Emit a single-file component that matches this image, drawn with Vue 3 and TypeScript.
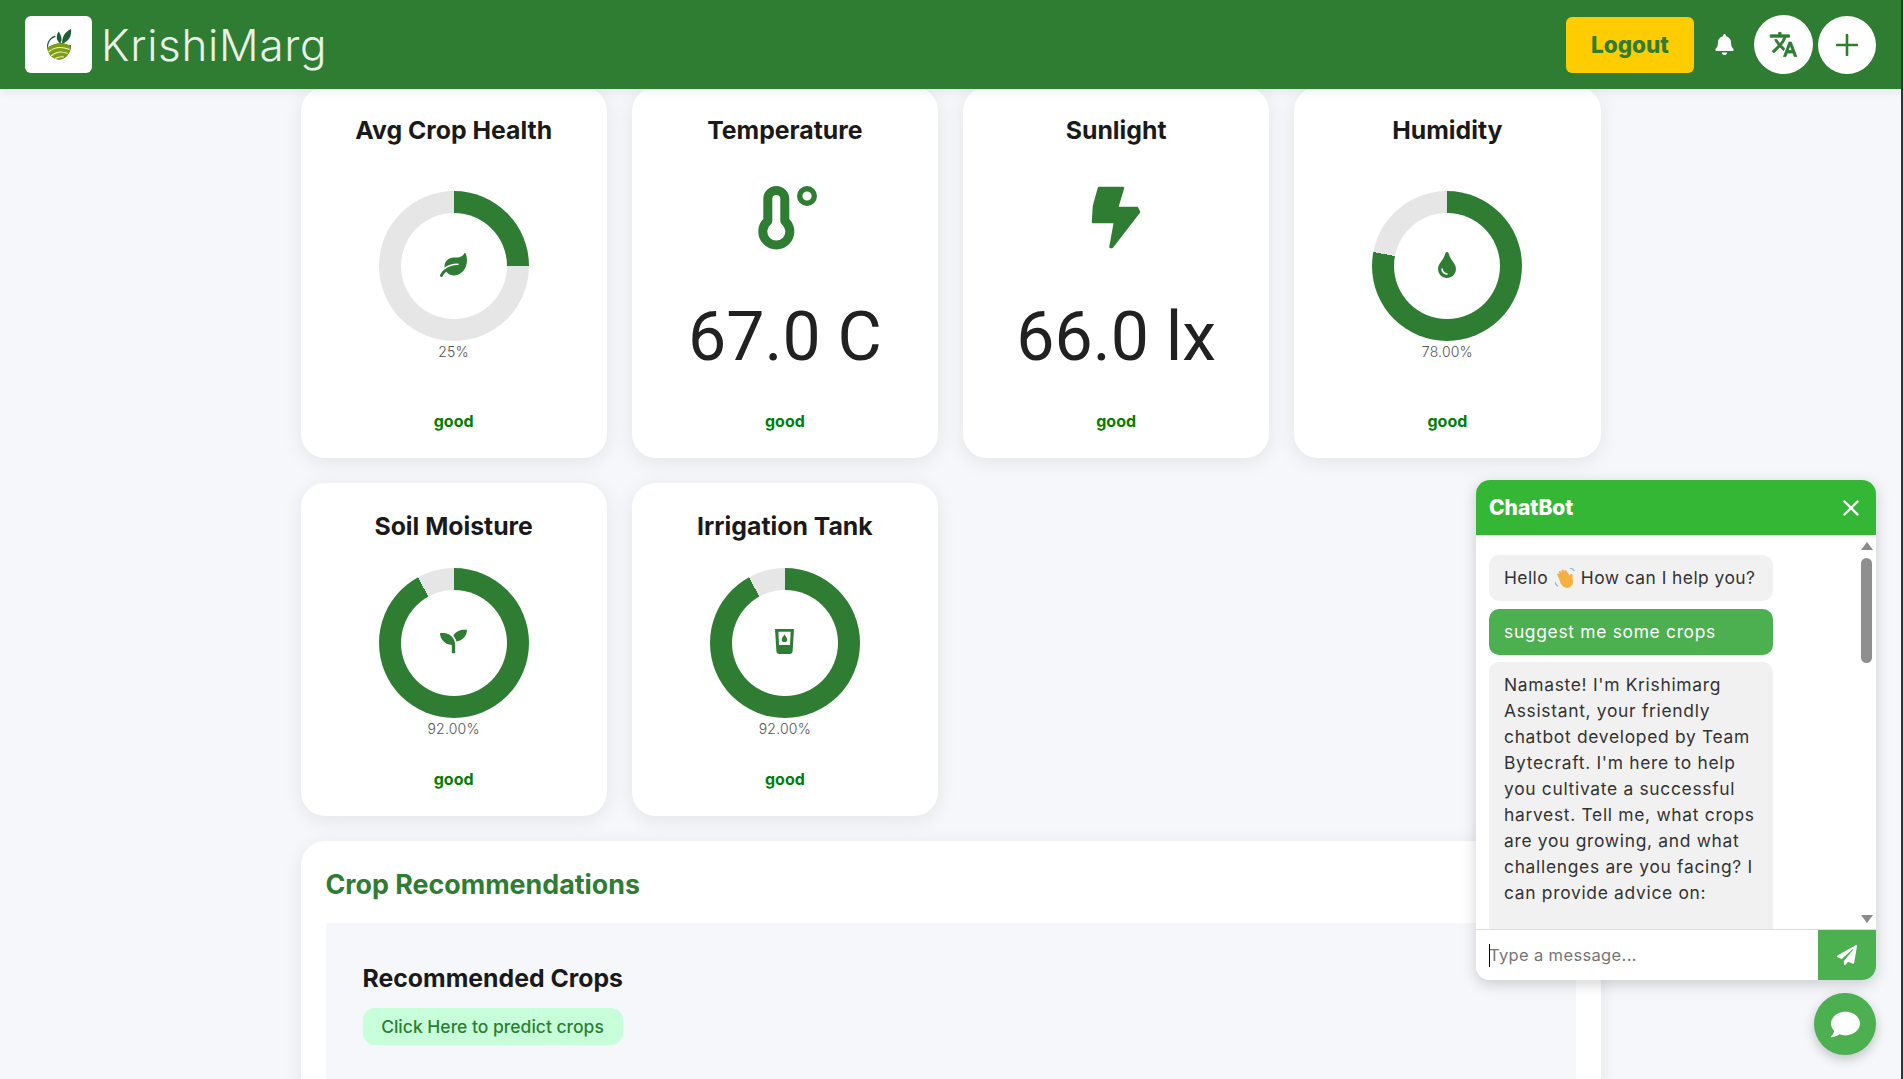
<script setup lang="ts">
interface Icon { viewBox: string; d: string; width: number; height: number }
interface Metric {
  title: string
  status: string
  percent?: number
  label?: string
  icon?: Icon
  value?: string
  kind?: string
}

const leaf: Icon = { viewBox: '0 0 576 512', width: 27, height: 24, d: 'M546.2 9.7c-5.6-12.5-21.6-13-28.3-1.2C486.9 62.4 431.4 96 368 96h-80C182 96 96 182 96 288c0 7 .8 13.7 1.5 20.5C161.3 262.8 253.4 224 384 224c8.8 0 16 7.2 16 16s-7.2 16-16 16C132.6 256 26 410.1 2.4 468c-6.6 16.3 1.2 34.9 17.5 41.6 16.4 6.8 35-1.1 41.8-17.3 1.5-3.6 20.9-47.9 71.9-90.6 32.4 43.9 94 85.8 174.9 77.2C465.5 467.5 576 326.7 576 154.3c0-50.2-10.8-102.2-29.8-144.6z' }
const drop: Icon = { viewBox: '0 0 352 512', width: 18, height: 26, d: 'M205.22 22.09c-7.94-28.78-49.44-30.12-58.44 0C100.01 179.85 0 222.72 0 333.91 0 432.35 78.72 512 176 512s176-79.65 176-178.09c0-111.75-99.79-153.34-146.78-311.82zM176 448c-61.75 0-112-50.25-112-112 0-8.84 7.16-16 16-16s16 7.16 16 16c0 44.11 35.89 80 80 80 8.84 0 16 7.16 16 16s-7.16 16-16 16z' }
const seedling: Icon = { viewBox: '0 0 512 512', width: 27, height: 27, d: 'M64 96H0c0 123.7 100.3 224 224 224v144c0 8.8 7.2 16 16 16h32c8.8 0 16-7.2 16-16V320C288 196.3 187.7 96 64 96zm384-64c-84.2 0-157.4 46.5-195.7 115.2 27.7 30.2 48.2 66.9 59 107.6C424 243.1 512 147.9 512 32h-64z' }
const tank: Icon = { viewBox: '0 0 19 25', width: 19, height: 25, d: 'M0 0H19L17.6 22.6A2.6 2.6 0 0 1 15 25H4A2.6 2.6 0 0 1 1.4 22.6ZM3.4 2.8L4 16H15L15.6 2.8ZM9.5 5.4C10.6 7.2 12.2 8.6 12.2 10.4A2.7 2.7 0 0 1 6.8 10.4C6.8 8.6 8.4 7.2 9.5 5.4Z' }

const topRow: Metric[] = [
  { title: 'Avg Crop Health', status: 'good', percent: 25, label: '25%', icon: leaf },
  { title: 'Temperature', status: 'good', value: '67.0 C', kind: 'thermo' },
  { title: 'Sunlight', status: 'good', value: '66.0 lx', kind: 'bolt' },
  { title: 'Humidity', status: 'good', percent: 78, label: '78.00%', icon: drop },
  { title: 'Soil Moisture', status: 'good', percent: 92, label: '92.00%', icon: seedling },
  { title: 'Irrigation Tank', status: 'good', percent: 92, label: '92.00%', icon: tank },
]

const ring = (p: number) => `conic-gradient(#2e7d32 0 ${p}%, #e6e6e6 ${p}% 100%)`
</script>

<template>
  <div class="page">
    <header class="topbar">
      <div class="brand">
        <div class="logo">
          <svg width="26" height="31" viewBox="0 0 26 31">
            <path d="M9 6.5A12.5 12.5 0 0 0 1 16C1 24 6 30.5 13 30.5S25 24 25 16H24L23 16.5C18 13 9 13 2 19 2.2 13 4.6 9.6 9.6 8Z" fill="#1f5d34"/>
            <path d="M1.4 18.6C8 13.6 17.4 13.2 24.6 16.8 24.4 24.6 19.4 30.4 13 30.4 6.6 30.4 1.6 25 1.4 18.6Z" fill="#7f9e12"/>
            <path d="M2.5 23C8 18 16 17.5 23.5 20.5M5 27C10 23 16 22 21.6 24.6M9 29.6C12 28 15 27.5 18 28" fill="none" stroke="#eef3d0" stroke-width="1.1"/>
            <path d="M14.5 14.5C10.5 12 9.5 7.5 12.6 2.5 15.6 6.4 16.4 10.5 14.5 14.5Z" fill="#1f5d34"/>
            <path d="M16.2 14.8C15.6 8.5 18.6 3 25 0 26 6.4 23 12.4 16.2 14.8Z" fill="#1f5d34"/>
          </svg>
        </div>
        <span class="brand-name">KrishiMarg</span>
      </div>
      <div class="actions">
        <button class="logout">Logout</button>
        <svg class="bell" width="19" height="21" viewBox="0 0 448 512"><path fill="#fff" d="M224 512c35.32 0 63.97-28.65 63.97-64H160.03c0 35.35 28.65 64 63.97 64zm215.39-149.71c-19.32-20.76-55.47-51.99-55.47-154.29 0-77.7-54.48-139.9-127.94-155.16V32c0-17.67-14.32-32-31.98-32s-31.98 14.33-31.98 32v20.84C118.56 68.1 64.08 130.3 64.08 208c0 102.3-36.15 133.53-55.47 154.29-6 6.45-8.66 14.16-8.61 21.71.11 16.4 12.98 32 32.1 32h383.8c19.12 0 32-15.6 32.1-32 .05-7.55-2.61-15.27-8.61-21.71z"/></svg>
        <button class="round translate">
          <svg width="29" height="29" viewBox="0 0 24 24"><path fill="#2e7d32" stroke="#2e7d32" stroke-width=".7" d="M12.87 15.07l-2.54-2.51.03-.03c1.74-1.94 2.98-4.17 3.71-6.53H17V4h-7V2H8v2H1v1.99h11.17C11.5 7.92 10.44 9.75 9 11.35 8.07 10.32 7.3 9.19 6.69 8h-2c.73 1.63 1.73 3.17 2.98 4.56l-5.09 5.02L4 19l5-5 3.11 3.11.76-2.04zM18.5 10h-2L12 22h2l1.12-3h4.75L21 22h2l-4.5-12zm-2.62 7l1.62-4.33L19.12 17h-3.24z"/></svg>
        </button>
        <button class="round plus">
          <svg width="22" height="22" viewBox="0 0 22 22"><path d="M11 1V21M1 11H21" stroke="#2e7d32" stroke-width="2.6" stroke-linecap="round"/></svg>
        </button>
      </div>
    </header>

    <main class="content">
      <section class="grid">
        <article v-for="m in topRow" :key="m.title" class="card">
          <h3 class="card-title">{{ m.title }}</h3>
          <div v-if="m.percent !== undefined" class="gauge">
            <div class="donut" :style="{ background: ring(m.percent) }">
              <div class="donut-hole">
                <svg v-if="m.icon" :width="m.icon.width" :height="m.icon.height" :viewBox="m.icon.viewBox">
                  <path fill="#2e7d32" fill-rule="evenodd" :d="m.icon.d" />
                </svg>
              </div>
            </div>
            <div class="pct">{{ m.label }}</div>
          </div>
          <div v-else class="reading">
            <svg v-if="m.kind === 'thermo'" class="big-icon" width="59" height="64" viewBox="-3 0 59 64">
              <path d="M9.8 35V13A8.5 8.5 0 0 1 26.8 13V35A13.5 13.5 0 1 1 9.8 35Z" fill="none" stroke="#2e7d32" stroke-width="9" stroke-linejoin="round"/>
              <circle cx="49" cy="10" r="7.3" fill="none" stroke="#2e7d32" stroke-width="5.4"/>
            </svg>
            <svg v-else class="big-icon" width="59" height="64" viewBox="0 0 59 64">
              <path d="M12 2H36L30 22H50L52 26 25 61 23.5 61 28 36H6L7 20Z" fill="#2e7d32" stroke="#2e7d32" stroke-width="2.5" stroke-linejoin="round"/>
            </svg>
            <div class="value">{{ m.value }}</div>
          </div>
          <div class="status">{{ m.status }}</div>
        </article>
      </section>

      <section class="reco">
        <h2 class="reco-title">Crop Recommendations</h2>
        <div class="reco-box">
          <h3 class="reco-head">Recommended Crops</h3>
          <button class="predict">Click Here to predict crops</button>
        </div>
      </section>
    </main>

    <aside class="chat">
      <div class="chat-head">
        <span class="chat-title">ChatBot</span>
        <svg width="16" height="16" viewBox="0 0 16 16"><path d="M1.5 1.5L14.5 14.5M14.5 1.5L1.5 14.5" stroke="#fff" stroke-width="2.4" stroke-linecap="round"/></svg>
      </div>
      <div class="chat-body">
        <div class="msg bot greeting">Hello
          <svg class="wave" width="20" height="20" viewBox="1 1 16 16">
            <path d="M4 9L2.8 6.6C2.3 5.6 3.6 4.8 4.3 5.7L4.6 6 4.2 4.7C3.8 3.5 5.2 3 5.8 4L6.4 4.8 6.2 3.3C6 2.1 7.6 1.8 8 3L8.6 4.6 8.6 3.4C8.6 2.3 10.1 2.2 10.4 3.3L12.8 7.2C13.2 6.2 13.6 5.6 14.5 5.8 15.4 6 15.2 7 15 8L15.4 11.6C15.6 15 12.8 17.2 10 16.8 7.8 16.5 6.6 15 5.6 13.4Z" fill="#f6b042"/>
            <path d="M1 12C1.2 13.6 2 14.8 3.4 15.6M12.8 1C14.4 1.2 15.6 2 16.4 3.4" fill="none" stroke="#7fb8e8" stroke-width="1"/>
          </svg>
          How can I help you?</div>
        <div class="msg user">suggest me some crops</div>
        <div class="msg bot long">Namaste! I'm Krishimarg<br>Assistant, your friendly<br>chatbot developed by Team<br>Bytecraft. I'm here to help<br>you cultivate a successful<br>harvest. Tell me, what crops<br>are you growing, and what<br>challenges are you facing? I<br>can provide advice on:</div>
        <div class="scroll-up"></div>
        <div class="scroll-thumb"></div>
        <div class="scroll-down"></div>
      </div>
      <div class="chat-input">
        <span class="caret"></span>
        <input class="field" type="text" placeholder="Type a message..." />
        <button class="send">
          <svg width="20" height="20" viewBox="0 0 512 512"><path fill="#fff" d="M476 3.2L12.5 270.6c-18.1 10.4-15.8 35.6 2.2 43.2L121 358.4l287.3-253.2c5.5-4.9 13.3 2.6 8.6 8.3L176 407v80.5c0 23.6 28.5 32.9 42.5 15.8L282 426l124.6 52.2c14.2 6 30.4-2.9 33-18.2l72-432C515 7.8 493.3-6.8 476 3.2z"/></svg>
        </button>
      </div>
    </aside>

    <button class="fab">
      <svg width="29" height="29" viewBox="0 0 512 512"><path fill="#fff" d="M256 32C114.6 32 0 125.1 0 240c0 49.6 21.4 95 57 130.7C44.5 421.1 2.7 466 2.2 466.5c-2.2 2.3-2.8 5.7-1.5 8.7S4.8 480 8 480c66.3 0 116-31.8 140.6-51.4 32.7 12.3 69 19.4 107.4 19.4 141.4 0 256-93.1 256-208S397.4 32 256 32z"/></svg>
    </button>
  </div>
</template>

<style>
html, body { margin: 0; height: 1079px; overflow: hidden; background: #333; }
#app { width: 1901px; height: 1079px; overflow: hidden; }
</style>

<style scoped>
.page {
  position: relative;
  height: 1079px;
  overflow: hidden;
  background: #f5f7fb;
  color: #1a1a1a;
  font-family: Inter, "Noto Sans", sans-serif;
}
button { border: 0; font-family: inherit; cursor: pointer; padding: 0; }
h2, h3 { margin: 0; }

.topbar {
  position: relative;
  z-index: 5;
  height: 89px;
  box-sizing: border-box;
  padding: 0 25px;
  display: flex;
  align-items: center;
  justify-content: space-between;
  background: #2e7d32;
  box-shadow: 0 2px 10px rgba(0, 0, 0, 0.08);
}
.brand { display: flex; align-items: center; gap: 9px; }
.logo {
  width: 67px;
  height: 57px;
  border-radius: 6px;
  background: #fff;
  display: flex;
  align-items: center;
  justify-content: center;
}
.brand-name {
  font-size: 44px;
  font-weight: 300;
  letter-spacing: 0.7px;
  color: #e8f0e8;
}
.actions { display: flex; align-items: center; }
.logout {
  width: 128px;
  height: 56px;
  border-radius: 6px;
  background: #ffcc00;
  color: #2e7d32;
  font-size: 22.5px;
  font-weight: 800;
}
.bell { margin: 0 20px 0 21px; }
.round {
  border-radius: 50%;
  background: #fff;
  display: flex;
  align-items: center;
  justify-content: center;
}
.translate { width: 59px; height: 59px; margin-right: 5px; }
.plus { width: 58px; height: 58px; }

.content {
  width: 1300px;
  margin: -2px auto 0;
  display: flex;
  flex-direction: column;
  gap: 25px;
}
.grid {
  display: grid;
  grid-template-columns: repeat(4, 1fr);
  gap: 25px;
}
.card {
  background: #fff;
  border-radius: 24px;
  padding: 24px;
  box-shadow: 0 4px 20px rgba(0, 0, 0, 0.08);
  display: flex;
  flex-direction: column;
  justify-content: space-between;
  align-items: center;
  gap: 25px;
  text-align: center;
}
.card-title {
  font-size: 24.8px;
  font-weight: 700;
  line-height: 36px;
  padding-top: 1px;
  margin-bottom: -1px;
  color: #1a1a1a;
  white-space: nowrap;
}
.gauge { height: 175px; display: flex; flex-direction: column; align-items: center; }
.donut { width: 150px; height: 150px; border-radius: 50%; display: flex; align-items: center; justify-content: center; }
.donut-hole {
  width: 106px;
  height: 106px;
  box-sizing: border-box;
  padding-bottom: 3px;
  border-radius: 50%;
  background: #fff;
  display: flex;
  align-items: center;
  justify-content: center;
}
.pct { font-size: 14px; line-height: 20px; padding-top: 1px; font-weight: 300; color: #555; letter-spacing: 0.2px; }
.reading { padding-top: 14px; display: flex; flex-direction: column; align-items: center; }
.big-icon { display: block; margin-bottom: 39px; overflow: visible; }
.value {
  font-family: Roboto, "Liberation Sans", sans-serif;
  font-size: 68px;
  font-weight: 400;
  line-height: 96px;
  color: #212121;
  white-space: nowrap;
}
.status { font-size: 16px; line-height: 23px; margin-bottom: 1px; font-weight: 700; color: #008000; }

.reco {
  background: #fff;
  border-radius: 24px;
  padding: 25px;
  height: 400px;
  box-shadow: 0 4px 20px rgba(0, 0, 0, 0.08);
}
.reco-title { font-size: 26.8px; line-height: 36px; font-weight: 700; color: #2e7d32; margin-bottom: 21px; }
.reco-box { background: #f5f7fb; padding: 37px; height: 300px; display: flex; flex-direction: column; align-items: flex-start; }
.reco-head { font-size: 24.8px; line-height: 36px; font-weight: 700; color: #1a1a1a; margin-bottom: 12px; }
.predict {
  width: 260px;
  height: 37px;
  padding-bottom: 1px;
  border-radius: 12px;
  background: #c6ffda;
  color: #2e7d32;
  font-size: 17.5px;
  font-weight: 500;
}

.chat {
  position: absolute;
  z-index: 8;
  right: 25px;
  top: 480px;
  width: 400px;
  height: 500px;
  border-radius: 14px;
  overflow: hidden;
  background: #fff;
  box-shadow: 0 4px 15px rgba(0, 0, 0, 0.18);
  display: flex;
  flex-direction: column;
}
.chat-head {
  height: 55px;
  flex: none;
  padding: 0 17px 0 13px;
  display: flex;
  align-items: center;
  justify-content: space-between;
  background: #35b736;
}
.chat-title { color: #fff; font-size: 21px; font-weight: 800; }
.chat-body {
  position: relative;
  height: 394px;
  flex: none;
  overflow: hidden;
  padding: 20px 0 0 13px;
  display: flex;
  flex-direction: column;
  align-items: flex-start;
  gap: 7.5px;
  box-sizing: border-box;
}
.msg {
  width: 284px;
  flex: none;
  box-sizing: border-box;
  padding: 10px 15px;
  border-radius: 10px;
  font-size: 17.4px;
  letter-spacing: 0.7px;
  line-height: 26px;
  color: #333;
  white-space: nowrap;
}
.greeting { letter-spacing: 0.45px; }
.bot { background: #f1f1f1; }
.user { background: #4caf50; color: #fff; }
.long { padding-bottom: 60px; }
.wave { vertical-align: -4px; margin: 0 1px; }
.scroll-up, .scroll-down {
  position: absolute;
  right: 3px;
  width: 0;
  height: 0;
  border-left: 6px solid transparent;
  border-right: 6px solid transparent;
}
.scroll-up { top: 7px; border-bottom: 8px solid #8a8a8a; }
.scroll-down { bottom: 6px; border-top: 8px solid #8a8a8a; }
.scroll-thumb {
  position: absolute;
  right: 4px;
  top: 23px;
  width: 11px;
  height: 105px;
  border-radius: 6px;
  background: #8f8f8f;
}
.chat-input {
  position: relative;
  flex: 1;
  display: flex;
  border-top: 1px solid #ddd;
}
.field {
  flex: 1;
  min-width: 0;
  border: 0;
  outline: 0;
  padding: 0 0 0 13px;
  font-family: inherit;
  font-size: 16.5px;
  letter-spacing: 0.35px;
  background: #fff;
}
.field::placeholder { color: #757575; }
.caret { position: absolute; left: 13px; top: 14px; width: 1px; height: 23px; background: #000; }
.send { width: 58px; background: #4caf50; display: flex; align-items: center; justify-content: center; }

.fab {
  position: absolute;
  z-index: 8;
  right: 25px;
  top: 993px;
  width: 62px;
  height: 62px;
  border-radius: 50%;
  background: #4caf50;
  box-shadow: 0 4px 12px rgba(0, 0, 0, 0.22);
  display: flex;
  align-items: center;
  justify-content: center;
}
</style>
